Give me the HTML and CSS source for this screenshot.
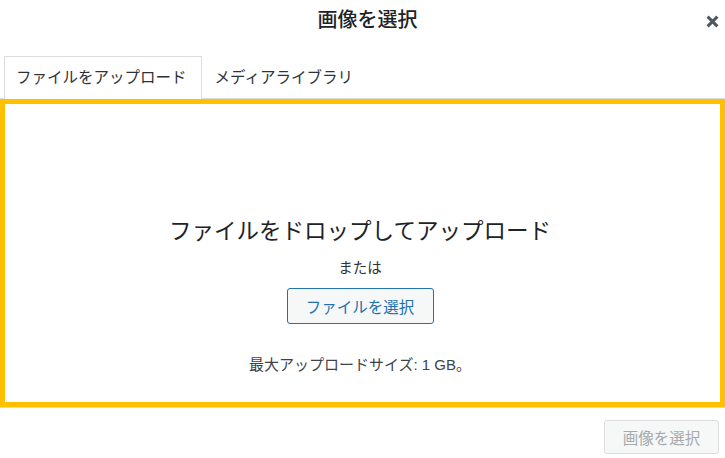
FILE: index.html
```html
<!DOCTYPE html>
<html lang="ja">
<head>
<meta charset="utf-8">
<title>画像を選択</title>
<link rel="stylesheet" href="styles.css">
</head>
<body>
<div class="modal">
  <header class="header">
    <span></span>
    <h1 class="title">画像を選択</h1>
    <button class="close" aria-label="閉じる">
      <svg width="13" height="13" viewBox="0 0 13 13"><path d="M1.6 1.6 L11.4 11.4 M11.4 1.6 L1.6 11.4" stroke="#50575e" stroke-width="3" stroke-linecap="butt"/></svg>
    </button>
  </header>
  <nav class="tabs">
    <div class="tab active">ファイルをアップロード</div>
    <div class="tab">メディアライブラリ</div>
  </nav>
  <section class="dropzone">
    <p class="drop-title">ファイルをドロップしてアップロード</p>
    <p class="or">または</p>
    <button class="select-btn">ファイルを選択</button>
    <p class="max-size">最大アップロードサイズ: 1 GB。</p>
  </section>
  <footer class="footer">
    <button class="primary" disabled>画像を選択</button>
  </footer>
</div>
</body>
</html>
```
FILE: styles.css
```css
* { box-sizing: border-box; }
html, body {
  margin: 0;
  padding: 0;
  background: #fff;
}
body {
  font-family: "Liberation Sans", "Noto Sans CJK JP", sans-serif;
  color: #1d2327;
  width: 725px;
  height: 458px;
  overflow: hidden;
}
.modal {
  display: flex;
  flex-direction: column;
}
.header {
  height: 56px;
  display: grid;
  grid-template-columns: 1fr auto 1fr;
  align-items: start;
}
.title {
  margin: 0;
  padding: 7px 0 0 10px;
  font-size: 20px;
  line-height: 26px;
  font-weight: 500;
  color: #1d2327;
}
.close {
  justify-self: end;
  margin: 15px 6px 0 0;
  width: 13px;
  height: 13px;
  padding: 0;
  border: 0;
  background: none;
  display: flex;
}
.tabs {
  display: flex;
  padding-left: 4px;
  height: 43px;
  border-bottom: 1px solid #dcdcde;
}
.tab {
  height: 43px;
  font-size: 15.5px;
  line-height: 41px;
  color: #2c3338;
  padding: 0 12px;
  border: 1px solid transparent;
  border-bottom: 0;
}
.tab.active {
  border-color: #dcdcde;
  background: #fff;
  padding: 0 14px 0 11px;
}
.dropzone {
  height: 308px;
  border: 5px solid #ffc000;
  display: flex;
  flex-direction: column;
  align-items: center;
  padding: 114px 5px 0 0;
}
.dropzone p { margin: 0; }
.drop-title {
  font-size: 22.5px;
  line-height: 28px;
  color: #1d2327;
}
.or {
  margin-top: 12px !important;
  font-size: 14.5px;
  line-height: 20px;
  color: #2c3338;
}
.select-btn {
  margin-top: 10px;
  width: 147px;
  height: 36px;
  font-family: inherit;
  font-size: 15.5px;
  color: #2271b1;
  background: #f6f7f7;
  border: 1px solid #2271b1;
  border-radius: 3px;
  padding: 0;
}
.max-size {
  margin-top: 31px !important;
  font-size: 15px;
  line-height: 20px;
  color: #3c434a;
}
.footer {
  border-top: 1px solid #dcdcde;
  height: 51px;
  display: flex;
  justify-content: flex-end;
  align-items: flex-start;
  padding: 12px 6px 0 0;
}
.primary {
  width: 115px;
  height: 34px;
  font-family: inherit;
  font-size: 15.5px;
  color: #a7aaad;
  background: #f6f7f7;
  border: 1px solid #dcdcde;
  border-radius: 3px;
  padding: 0;
}
```
